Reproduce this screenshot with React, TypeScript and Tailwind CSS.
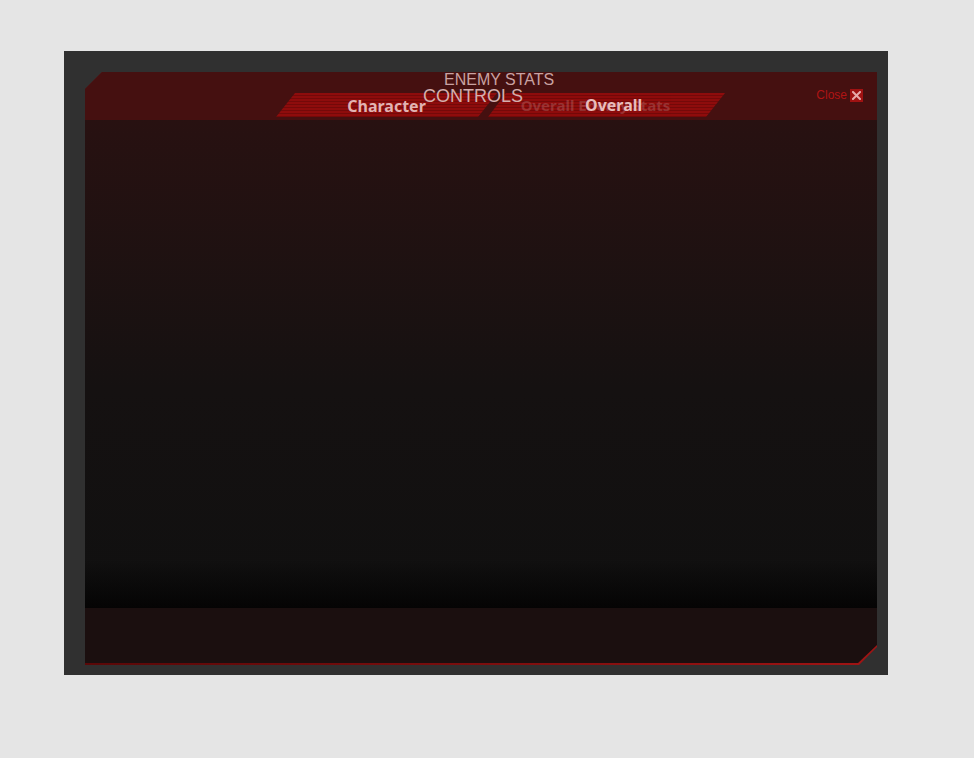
export default function App() {
  return (
    <div className="min-h-[758px] w-full bg-[#e5e5e5] pl-[64px] pt-[51px]">
      <div className="h-[624px] w-[824px] bg-[#303030] pb-[10px] pl-[21px] pr-[11px] pt-[21px]">
        {/* red edge behind the panel, shows through at the bottom */}
        <div className="h-[593px] w-[792px] bg-gradient-to-r from-[#5a0808] to-[#a01414] [clip-path:polygon(17px_0,100%_0,100%_calc(100%-18px),calc(100%-18px)_100%,0_100%,0_17px)]">
          <div className="flex h-[591px] flex-col [clip-path:polygon(17px_0,100%_0,100%_calc(100%-18px),calc(100%-19px)_100%,0_100%,0_17px)]">
            <Header />
            <div className="h-[488px] bg-gradient-to-b from-[#281111] via-[#151111] via-55% to-[#101010]">
              <div className="h-full bg-gradient-to-b from-transparent from-90% to-[#050404]" />
            </div>
            <div className="flex-1 bg-[#1b0f0f]" />
          </div>
        </div>
      </div>
    </div>
  );
}

function Header() {
  return (
    <div className="relative h-[48px] shrink-0 bg-[#451010]">
      <div className="flex pl-[191px] pt-[21px]">
        <Tab
          width="w-[221px]"
          label="Character"
          className="text-[#e2b3b3]"
        />
        <div className="relative -ml-[9px] flex h-[24px] w-[237px] items-center justify-center bg-[image:repeating-linear-gradient(180deg,#8e0c0c_0px,#8e0c0c_2px,#740909_2px,#740909_3px)] [clip-path:polygon(18px_0,100%_0,calc(100%-19px)_100%,0_100%)]">
          <span className="pr-[22px] pt-[1px] font-['Noto_Sans',sans-serif] text-[15px] font-bold leading-none text-[#c98a8a] opacity-30">
            Overall Enemy Stats
          </span>
          <span className="absolute left-[97px] top-[4px] font-['Noto_Sans',sans-serif] text-[16px] font-bold leading-none text-[#e8bcbc]">
            Overall
          </span>
        </div>
      </div>

      <span className="absolute left-[359px] top-[-1px] font-['Liberation_Sans',Arial,sans-serif] text-[16px] leading-[18px] text-[#c9a2a2]">
        ENEMY STATS
      </span>
      <span className="absolute left-[338px] top-[14px] font-['Liberation_Sans',Arial,sans-serif] text-[18px] leading-[20px] text-[#d4aeae]">
        CONTROLS
      </span>

      <div className="absolute right-[14px] top-[16px] flex items-center gap-[3px]">
        <span className="font-['Liberation_Sans',Arial,sans-serif] text-[12px] leading-[14px] text-[#b01414]">
          Close
        </span>
        <span className="flex h-[13px] w-[13px] items-center justify-center bg-[#a01212]">
          <svg width="9" height="9" viewBox="0 0 9 9">
            <path
              d="M1 1L8 8M8 1L1 8"
              stroke="#e7a9a9"
              strokeWidth="2"
              strokeLinecap="square"
            />
          </svg>
        </span>
      </div>
    </div>
  );
}

function Tab({
  width,
  label,
  className,
}: {
  width: string;
  label: string;
  className: string;
}) {
  return (
    <div
      className={`${width} flex h-[24px] items-center justify-center bg-[image:repeating-linear-gradient(180deg,#8e0c0c_0px,#8e0c0c_2px,#740909_2px,#740909_3px)] [clip-path:polygon(19px_0,100%_0,calc(100%-19px)_100%,0_100%)]`}
    >
      <span
        className={`pt-[1px] font-['Noto_Sans',sans-serif] text-[16px] font-bold leading-none ${className}`}
      >
        {label}
      </span>
    </div>
  );
}
